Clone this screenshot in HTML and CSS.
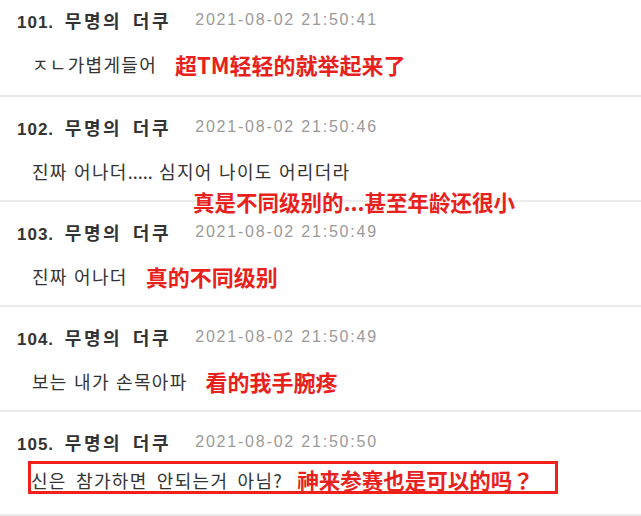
FILE: index.html
```html
<!DOCTYPE html>
<html lang="ko">
<head>
<meta charset="utf-8">
<link rel="stylesheet" href="styles.css">
</head>
<body>
<ul class="list">
  <li class="item first">
    <div class="head"><span class="name"><span class="num">101.</span> 무명의 더쿠</span><span class="date">2021-08-02 21:50:41</span></div>
    <div class="body"><span class="ko">ㅈㄴ가볍게들어</span><span class="zh">超TM轻轻的就举起来了</span></div>
  </li>
  <li class="item">
    <div class="head"><span class="name"><span class="num">102.</span> 무명의 더쿠</span><span class="date">2021-08-02 21:50:46</span></div>
    <div class="body"><span class="ko">진짜 어나더<span class="dots">.....</span> 심지어 나이도 어리더라</span></div>
    <span class="zh overlay">真是不同级别的...甚至年龄还很小</span>
  </li>
  <li class="item">
    <div class="head"><span class="name"><span class="num">103.</span> 무명의 더쿠</span><span class="date">2021-08-02 21:50:49</span></div>
    <div class="body"><span class="ko">진짜 어나더</span><span class="zh">真的不同级别</span></div>
  </li>
  <li class="item">
    <div class="head"><span class="name"><span class="num">104.</span> 무명의 더쿠</span><span class="date">2021-08-02 21:50:49</span></div>
    <div class="body"><span class="ko">보는 내가 손목아파</span><span class="zh">看的我手腕疼</span></div>
  </li>
  <li class="item last">
    <div class="head"><span class="name"><span class="num">105.</span> 무명의 더쿠</span><span class="date">2021-08-02 21:50:50</span></div>
    <div class="body boxed"><span class="ko">신은 참가하면 안되는거 아님?</span><span class="zh">神来参赛也是可以的吗？</span></div>
  </li>
</ul>
</body>
</html>
```
FILE: styles.css
```css
html, body {
  margin: 0;
  padding: 0;
  background: #ffffff;
  overflow: hidden;
}
body {
  width: 641px;
  height: 516px;
  font-family: "Liberation Sans", "Noto Sans CJK KR", sans-serif;
}
.list {
  list-style: none;
  margin: -10px 0 0 0;
  padding: 0;
}
.item {
  position: relative;
  padding: 18px 0 16px 0;
  border-bottom: 2px solid #ebebeb;
}
.item.first {
  padding-bottom: 18px;
}
.head {
  display: flex;
  align-items: center;
  height: 24px;
  padding-left: 17px;
  gap: 24px;
  white-space: nowrap;
}
.name {
  font-size: 18px;
  font-weight: bold;
  color: #333333;
  letter-spacing: 2.6px;
  word-spacing: 3px;
  font-family: "Noto Sans CJK KR", sans-serif;
}
.num {
  font-family: "Liberation Sans", sans-serif;
  font-size: 17px;
  letter-spacing: 1px;
}
.date {
  font-size: 16px;
  color: #9a9a9a;
  letter-spacing: 1.8px;
}
.body {
  display: flex;
  align-items: center;
  height: 26px;
  margin-top: 19px;
  padding-left: 32px;
  gap: 18px;
  white-space: nowrap;
}
.ko {
  font-size: 18px;
  color: #333333;
  letter-spacing: 1.3px;
  word-spacing: 0px;
  font-family: "Noto Sans CJK KR", sans-serif;
}
.dots {
  letter-spacing: 0;
}
.zh {
  font-size: 22px;
  font-weight: bold;
  color: #e8211c;
  font-family: "Noto Sans CJK SC", sans-serif;
  line-height: 26px;
}
.overlay {
  position: absolute;
  left: 193px;
  top: 92px;
  font-size: 21.5px;
  white-space: nowrap;
}
.body.boxed {
  box-sizing: border-box;
  width: 530px;
  height: 33px;
  margin-top: 7px;
  margin-left: 28px;
  padding: 4px 0 0 0;
  border: 3px solid #f0201a;
  gap: 14px;
}
.body.boxed .ko {
  word-spacing: 3px;
}
.body.boxed .zh {
  font-size: 21.5px;
}
.item.last {
  padding-bottom: 20px;
}
```
